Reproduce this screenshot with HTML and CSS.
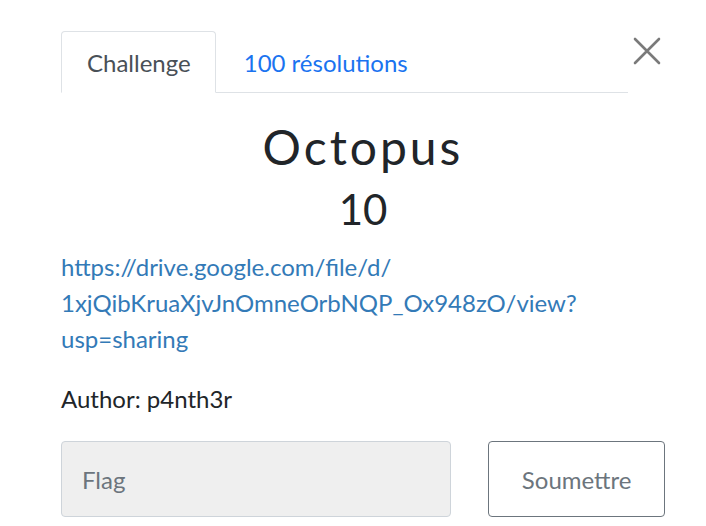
FILE: index.html
```html
<!DOCTYPE html>
<html>
<head>
<meta charset="utf-8">
<link rel="stylesheet" href="styles.css">
</head>
<body>
<div class="modal">
  <div class="header">
    <ul class="tabs">
      <li class="tab active">Challenge</li>
      <li class="tab link">100 résolutions</li>
    </ul>
    <button class="close" aria-label="Close">
      <svg width="28" height="28" viewBox="0 0 28 28"><path d="M2 2 L26 26 M26 2 L2 26" stroke="#7a7a7a" stroke-width="2.6" stroke-linecap="round"/></svg>
    </button>
  </div>
  <h2 class="title">Octopus</h2>
  <h3 class="value">10</h3>
  <p class="desc"><a href="#">https://drive.google.com/file/d/<br>1xjQibKruaXjvJnOmneOrbNQP_Ox948zO/view?<br>usp=sharing</a></p>
  <p class="author">Author: p4nth3r</p>
  <form class="submit">
    <input class="flag" type="text" placeholder="Flag">
    <button class="btn" type="button">Soumettre</button>
  </form>
</div>
</body>
</html>
```
FILE: styles.css
```css
html, body { margin: 0; padding: 0; background: #fff; }
body { font-family: Lato, "Noto Sans", sans-serif; color: #212529; }
.modal { padding: 31px 41px 0 61px; width: 604px; }
.header { display: flex; align-items: flex-start; }
.tabs { list-style: none; margin: 0; padding: 0; display: flex; width: 567px; border-bottom: 1px solid #dee2e6; height: 61px; }
.tab { font-size: 24px; padding: 0 25px; line-height: 61px; height: 61px; box-sizing: border-box; }
.tab.active { border: 1px solid #dee2e6; border-bottom-color: #fff; border-radius: 4px 4px 0 0; color: #495057; height: 62px; background: #fff; padding: 0 24px 0 25px; }
.tab.link { color: #1a73f0; padding-left: 28px; line-height: 63px; }
.close { background: none; border: 0; padding: 0; margin: 6px 0 0 5px; width: 28px; height: 28px; }
.title { text-align: center; font-weight: 400; font-size: 48px; letter-spacing: 3px; margin: 24px 0 0; line-height: 60px; }
.value { text-align: center; font-weight: 400; font-size: 42px; margin: 0; line-height: 64px; }
.desc { margin: 8px 0 0; font-size: 24px; line-height: 36px; }
.desc a { color: #337ab7; text-decoration: none; }
.author { margin: 24px 0 0; font-size: 24px; line-height: 36px; }
.submit { display: flex; margin-top: 24px; gap: 37px; }
.flag { width: 391px; height: 76px; box-sizing: border-box; background: #efefef; border: 1px solid #ced4da; border-radius: 4px; padding: 0 20px; font-family: Lato, sans-serif; font-size: 24px; color: #6c757d; }
.flag::placeholder { color: #6c757d; }
.btn { width: 177px; height: 76px; box-sizing: border-box; background: #fff; border: 1px solid #6c757d; border-radius: 4px; font-family: Lato, sans-serif; font-size: 24px; color: #6c757d; }
```
